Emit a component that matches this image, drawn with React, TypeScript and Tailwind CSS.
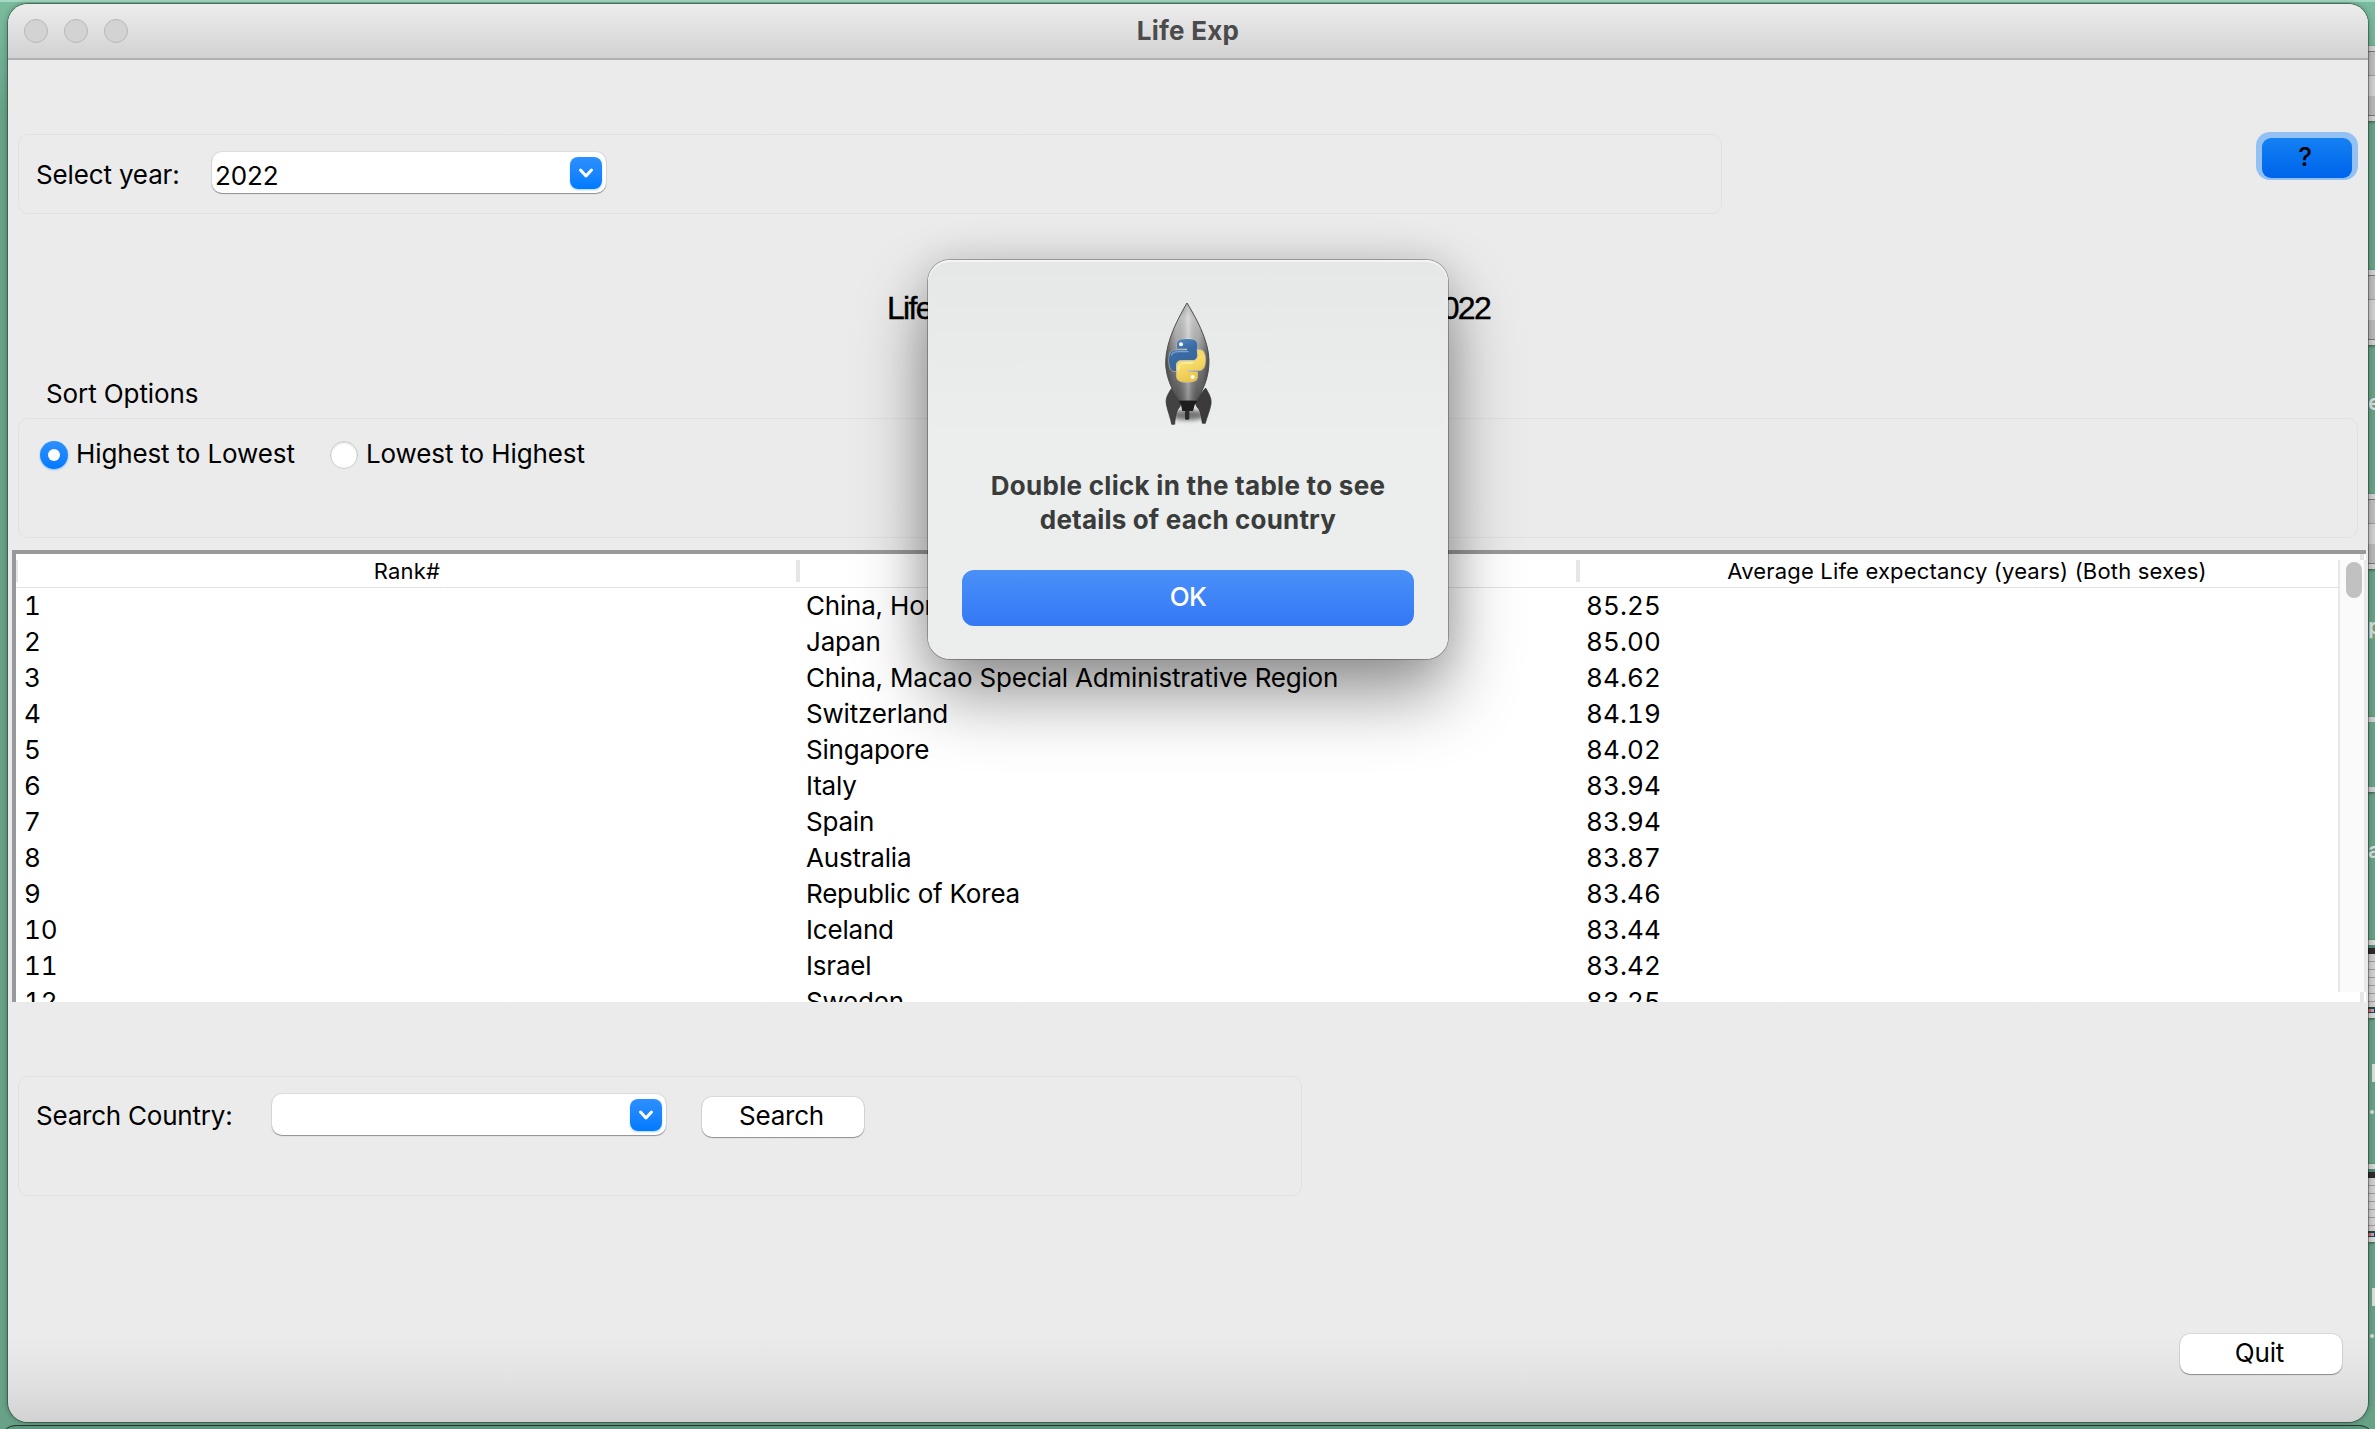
import React from "react";

const ROWS: [string, string, string][] = [
  ["1", "China, Hong Kong SAR", "85.25"],
  ["2", "Japan", "85.00"],
  ["3", "China, Macao Special Administrative Region", "84.62"],
  ["4", "Switzerland", "84.19"],
  ["5", "Singapore", "84.02"],
  ["6", "Italy", "83.94"],
  ["7", "Spain", "83.94"],
  ["8", "Australia", "83.87"],
  ["9", "Republic of Korea", "83.46"],
  ["10", "Iceland", "83.44"],
  ["11", "Israel", "83.42"],
  ["12", "Sweden", "83.25"],
];

function Combo({ value }: { value?: string }) {
  return (
    <div className="flex h-[41px] w-[394px] items-center justify-between rounded-[10px] bg-white pr-1 pl-[3px] shadow-[0_1px_1px_rgba(0,0,0,0.35),0_0_0_1px_rgba(0,0,0,0.06)]">
      <span className="pt-[7px] leading-8 tracking-[-0.1px]">{value}</span>
      <span className="flex h-8 w-8 items-center justify-center rounded-[8px] bg-linear-to-b from-[#2b90ff] to-[#007aff] shadow-[0_1px_2px_rgba(0,122,255,0.35)]">
        <svg width="16" height="12" viewBox="0 0 16 12" fill="none" stroke="#fff" strokeWidth="3" strokeLinecap="round" strokeLinejoin="round">
          <path d="M2.5 3 L8 9 L13.5 3" />
        </svg>
      </span>
    </div>
  );
}

function PushButton({ children }: { children: React.ReactNode }) {
  return (
    <button className="flex h-10 w-[162px] items-center justify-center rounded-[10px] bg-white pr-[3px] pb-[3px] tracking-[-0.2px] shadow-[0_1px_1px_rgba(0,0,0,0.35),0_0_0_1px_rgba(0,0,0,0.07)]">
      {children}
    </button>
  );
}

function Rocket() {
  return (
    <svg width="120" height="150" viewBox="0 0 360 450">
      <defs>
        <linearGradient id="hull" x1="0" y1="0" x2="0" y2="1">
          <stop offset="0" stopColor="#8f8f8f" />
          <stop offset="0.15" stopColor="#c4c4c4" />
          <stop offset="0.35" stopColor="#b2b2b2" />
          <stop offset="0.62" stopColor="#808080" />
          <stop offset="1" stopColor="#4c4c4c" />
        </linearGradient>
        <linearGradient id="shade" x1="0" y1="0" x2="1" y2="0">
          <stop offset="0" stopColor="#222" stopOpacity="0.6" />
          <stop offset="0.25" stopColor="#666" stopOpacity="0.1" />
          <stop offset="0.52" stopColor="#fff" stopOpacity="0.4" />
          <stop offset="0.75" stopColor="#777" stopOpacity="0.1" />
          <stop offset="1" stopColor="#222" stopOpacity="0.6" />
        </linearGradient>
        <linearGradient id="blue" x1="0" y1="0" x2="0.4" y2="1">
          <stop offset="0" stopColor="#5b8cc0" />
          <stop offset="0.5" stopColor="#3a6ba5" />
          <stop offset="1" stopColor="#38659a" />
        </linearGradient>
        <linearGradient id="gold" x1="0" y1="0" x2="0.4" y2="1">
          <stop offset="0" stopColor="#f3d24e" />
          <stop offset="0.5" stopColor="#f6dc6a" />
          <stop offset="1" stopColor="#eac54a" />
        </linearGradient>
        <filter id="soft" x="-30%" y="-60%" width="160%" height="220%">
          <feGaussianBlur stdDeviation="6" />
        </filter>
      </defs>
      <ellipse cx="175" cy="375" rx="52" ry="16" fill="#000" opacity="0.5" filter="url(#soft)" />
      <path d="M124 296 C110 318 107 326 109 342 C112 362 122 382 125 403 L134 403 C136 380 138 362 150 350 L154 332 Z" fill="#424242" stroke="#2c2c2c" strokeWidth="2" />
      <path d="M227 294 C240 316 245 328 243 342 C240 362 230 382 226 400 L217 400 C214 380 212 360 200 350 L194 332 Z" fill="#3b3b3b" stroke="#2c2c2c" strokeWidth="2" />
      <path d="M171 39 C150 75 107 150 107 218 C107 262 128 305 149 333 L198 333 C220 300 237 262 237 212 C237 150 193 75 171 39 Z" fill="url(#hull)" />
      <path d="M171 39 C150 75 107 150 107 218 C107 262 128 305 149 333 L198 333 C220 300 237 262 237 212 C237 150 193 75 171 39 Z" fill="url(#shade)" stroke="#505050" strokeWidth="3" />
      <path d="M146 332 H202 L194 345 L189 363 H157 L153 345 Z" fill="#1d1d1d" />
      <rect x="165" y="362" width="13" height="27" rx="4" fill="#2b2b2b" />
      <g stroke="#e8e4d0" strokeOpacity="0.55" strokeWidth="4" strokeLinejoin="round" paintOrder="stroke">
        <path d="M140 164 C140 150 152 147 171 147 C191 147 202 151 202 162 V194 C202 206 195 211 184 211 H154 C143 211 138 217 138 228 V243 H130 C121 240 117 226 117 212 C117 194 122 181 133 181 H171 V176 H140 Z" fill="url(#blue)" />
        <path d="M202 180 H211 C221 182 226 194 226 210 C226 228 221 239 209 241 H171 V246 H202 V262 C202 273 190 276 171 276 C151 276 140 271 140 260 V228 C140 218 145 213 156 213 H187 C198 213 204 206 204 195 Z" fill="url(#gold)" />
      </g>
      <path d="M124 196 C128 186 134 185 146 185 H176" fill="none" stroke="#a9c8e8" strokeOpacity="0.6" strokeWidth="4" />
      <path d="M146 240 C147 222 150 219 164 219 H190" fill="none" stroke="#fff6c0" strokeOpacity="0.7" strokeWidth="4" />
      <circle cx="153" cy="163" r="6" fill="#fff" />
      <circle cx="188" cy="261" r="6" fill="#fff" />
    </svg>
  );
}

function Dialog() {
  return (
    <div className="absolute top-[260px] left-[928px] flex h-[399px] w-[520px] flex-col items-center rounded-[22px] bg-linear-to-b from-[#e5e8e7] to-[#ebeeed] to-45% pt-[30px] shadow-[0_0_0_1px_rgba(0,0,0,0.28),0_36px_70px_rgba(0,0,0,0.42),0_0_40px_rgba(0,0,0,0.12),inset_0_2px_1px_rgba(255,255,255,0.55)]">
      <div className="h-[150px] pl-[3px]">
        <Rocket />
      </div>
      <p className="mt-[29px] text-center font-bold whitespace-nowrap text-[#3a3c3b]">
        <span className="block leading-[34px] tracking-[0.28px]">Double click in the table to see</span>
        <span className="block leading-[34px] tracking-[0.18px]">details of each country</span>
      </p>
      <button className="mt-[33px] flex h-14 w-[452px] items-center justify-center rounded-[12px] bg-linear-to-b from-[#4a90f8] to-[#3478f6] pb-[3px] font-medium tracking-[-0.6px] text-white">
        OK
      </button>
    </div>
  );
}

function DesktopCard({ top, open }: { top: string; open?: boolean }) {
  return (
    <div className={`absolute right-0 w-[7px] ${top} h-[75px] border-y-[5px] border-[#cfcfcf] shadow-[0_1px_3px_rgba(0,0,0,0.5)]`}>
      {!open && (
        <div className="flex h-full flex-col border-y border-[#777]">
          <div className="h-6 border-b border-[#999] bg-[#bcbcbc]" />
          <div className="h-5 bg-[#cecece]" />
          <div className="grow bg-[#b6b6b6]" />
        </div>
      )}
    </div>
  );
}

function DesktopThumb({ top }: { top: string }) {
  return (
    <div className={`absolute right-0 flex h-[78px] w-[7px] flex-col border-y-[5px] border-[#d6d6d6] ${top} shadow-[0_1px_3px_rgba(0,0,0,0.5)]`}>
      <div className="h-[3px] bg-[#4f8c73]" />
      <div className="h-[6px] bg-[#2c2c2c]" />
      <div className="grow bg-[repeating-linear-gradient(to_bottom,#cfcfcf_0px,#cfcfcf_7px,#9d9d9d_7px,#9d9d9d_8px)]" />
      <div className="flex h-[6px] items-center bg-[#27473b]">
        <div className="h-[3px] w-[3px] bg-[#d8644c]" />
        <div className="h-[3px] w-[3px] bg-[#9fa8e0]" />
      </div>
    </div>
  );
}

function DesktopLetter({ top, children }: { top: string; children: string }) {
  return (
    <div className={`absolute right-0 flex h-7 w-[7px] items-center overflow-hidden text-[22px] leading-7 font-semibold text-[#dcdedd] ${top}`}>
      {children}
    </div>
  );
}

function Desktop() {
  return (
    <>
      <div className="absolute inset-x-0 top-0 h-[2px] bg-[#a5d9c4]" />
      <DesktopCard top="top-[46px]" />
      <DesktopCard top="top-[270px]" />
      <DesktopLetter top="top-[388px]">e</DesktopLetter>
      <DesktopCard top="top-[494px]" />
      <DesktopLetter top="top-[612px]">p</DesktopLetter>
      <DesktopCard top="top-[717px]" open />
      <DesktopLetter top="top-[836px]">a</DesktopLetter>
      <DesktopThumb top="top-[940px]" />
      <div className="absolute top-[1064px] right-0 h-[18px] w-[3px] bg-[#dcdedd]" />
      <div className="absolute top-[1110px] right-[1px] h-1 w-1 rounded-full bg-[#dcdedd]" />
      <DesktopThumb top="top-[1164px]" />
      <div className="absolute top-[1288px] right-0 h-[18px] w-[3px] bg-[#dcdedd]" />
      <div className="absolute top-[1334px] right-[1px] h-1 w-1 rounded-full bg-[#dcdedd]" />
      <div className="absolute inset-x-0 top-[1425px] h-6 rounded-t-[16px] border-t border-[#26352e] bg-[#5f9a80]" />
    </>
  );
}

export default function App() {
  return (
    <div className="relative h-[1429px] w-[2375px] overflow-hidden bg-linear-to-b from-[#7bbd9f] to-[#67a287] to-8% pt-1 pl-2 font-['Inter',sans-serif] text-[26px] leading-8 text-black">
      <Desktop />
      <main className="relative flex h-[1418px] w-[2360px] flex-col overflow-hidden rounded-[20px] bg-linear-to-b from-[#ebebeb] from-94% via-[#e2e2e2] via-97% to-[#d2d2d2] shadow-[0_0_0_1px_rgba(0,0,0,0.3),0_0_6px_rgba(0,0,0,0.35)]">
        <header className="flex h-14 shrink-0 items-center border-b-2 border-[#b0b0b0] bg-linear-to-b from-[#ededed] to-[#d2d2d2]">
          <div className="flex w-[200px] gap-4 pl-4">
            <i className="h-6 w-6 rounded-full border border-[#b6b6b6] bg-[#d3d3d3]" />
            <i className="h-6 w-6 rounded-full border border-[#b6b6b6] bg-[#d3d3d3]" />
            <i className="h-6 w-6 rounded-full border border-[#b6b6b6] bg-[#d3d3d3]" />
          </div>
          <h1 className="grow pr-[200px] text-center font-bold tracking-[0.25px] text-[#4b4b4b]">Life Exp</h1>
        </header>

        <div className="mt-[72px] flex shrink-0 items-start justify-between pr-[10px] pl-[10px]">
          <section className="mt-[2px] flex h-20 w-[1704px] items-start rounded-[10px] border border-[#e1e1e1] pt-[17px] pl-[17px]">
            <span className="mt-[7px] w-[176px] tracking-[-0.15px]">Select year:</span>
            <Combo value="2022" />
          </section>
          <button className="flex h-12 w-[102px] items-start justify-center overflow-hidden rounded-[14px] bg-[#94c1f4] pt-[6px]">
            <span className="flex h-[40px] w-[90px] items-center justify-center rounded-[9px] bg-linear-to-b from-[#1580f2] to-[#0064ec] pr-[4px] pb-0.5 font-medium">?</span>
          </button>
        </div>

        <div className="mt-[74px] flex h-10 w-[604px] shrink-0 justify-between self-center pl-[1px] font-['Liberation_Sans',sans-serif] text-[32px] leading-10 tracking-[-1.7px] [-webkit-text-stroke:0.4px_black]">
          <span>Life</span>
          <span>2022</span>
        </div>

        <h2 className="mt-[50px] h-8 shrink-0 pl-[38px] tracking-[-0.1px]">Sort Options</h2>
        <section className="mx-[10px] mt-[8px] flex h-[120px] shrink-0 items-start rounded-[10px] border border-[#e1e1e1] pt-[21px] pl-[21px] tracking-[-0.12px]">
          <label className="flex w-[290px] items-center gap-2">
            <span className="flex h-7 w-7 items-center justify-center rounded-full bg-linear-to-b from-[#2b90ff] to-[#007aff] shadow-[0_1px_2px_rgba(0,122,255,0.4)]">
              <i className="h-3 w-3 rounded-full bg-white" />
            </span>
            <span className="-mt-[2px]">Highest to Lowest</span>
          </label>
          <label className="flex items-center gap-2">
            <span className="h-7 w-7 rounded-full border border-[#cbcbcb] bg-white shadow-[inset_0_1px_2px_rgba(0,0,0,0.15)]" />
            <span className="-mt-[2px]">Lowest to Highest</span>
          </label>
        </section>

        <div className="mt-3 ml-1 flex h-[452px] w-[2354px] shrink-0 flex-col border-t-4 border-[#999]">
          <div className="flex h-[448px] border-l-4 border-[#999] bg-white">
            <div className="w-[2322px] shrink-0 overflow-hidden">
              <div className="flex h-[34px] items-center border-b border-[#e2e2e2] text-[22px] tracking-[0.17px]">
                <div className="flex h-[22px] w-[780px] items-center justify-center border-l-2 border-[#e6e6e6]">Rank#</div>
                <div className="flex h-[22px] w-[780px] items-center justify-center border-l-4 border-[#e6e6e6]">Country</div>
                <div className="flex h-[22px] w-[762px] items-center justify-center border-l-4 border-[#e6e6e6] pl-[16px]">Average Life expectancy (years) (Both sexes)</div>
              </div>
              {ROWS.map(([rank, country, value]) => (
                <div key={rank} className="flex h-9 items-center pl-[8px]">
                  <span className="w-[782px] tracking-[-0.2px] tabular-nums">{rank}</span>
                  <span className="w-[780px] tracking-[-0.2px] whitespace-nowrap">{country}</span>
                  <span className="tracking-[0.1px] tabular-nums">{value}</span>
                </div>
              ))}
            </div>
            <div className="flex w-[28px] shrink-0 flex-col">
              <div className="flex h-[6px] w-[26px] justify-end"><i className="w-1 bg-[#e6e6e6]" /></div>
              <div className="flex h-[432px] w-[28px] justify-end border-x-2 border-[#e8e8e8] bg-[#fafafa] pt-[2px] pr-[2px]">
                <div className="h-9 w-4 rounded-full bg-[#c1c1c1]" />
              </div>
              <div className="flex h-[10px] w-[26px] justify-end"><i className="w-1 bg-[#e6e6e6]" /></div>
            </div>
          </div>
        </div>

        <section className="mt-[74px] ml-[10px] flex h-[120px] w-[1284px] shrink-0 items-start rounded-[10px] border border-[#e1e1e1] pt-[17px] pl-[17px]">
          <span className="mt-[6px] w-[236px] tracking-[-0.22px]">Search Country:</span>
          <Combo />
          <div className="mt-[3px] ml-9"><PushButton>Search</PushButton></div>
        </section>

        <div className="mt-[138px] mr-[26px] self-end">
          <PushButton>Quit</PushButton>
        </div>
      </main>
      <Dialog />
    </div>
  );
}
